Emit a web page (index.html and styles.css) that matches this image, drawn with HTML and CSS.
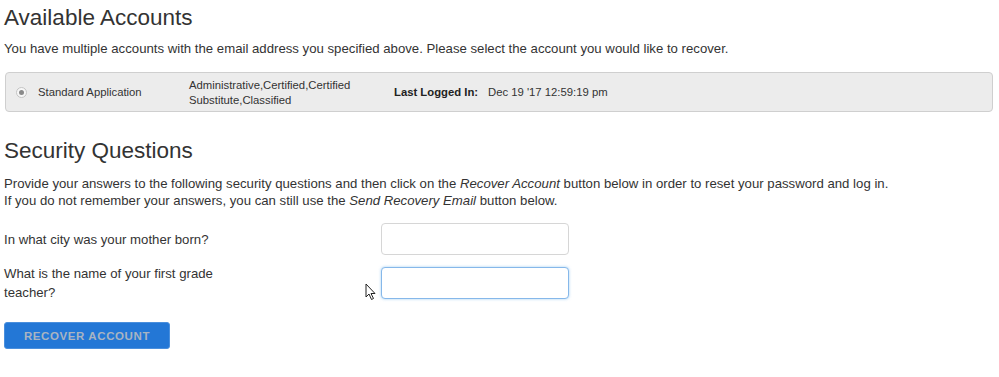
FILE: index.html
```html
<!DOCTYPE html>
<html lang="en">
<head>
    <meta charset="UTF-8">
    <title>Recover Account</title>
    <link rel="stylesheet" href="styles.css">
</head>
<body>
    <h2>Available Accounts</h2>
    <p class="intro">You have multiple accounts with the email address you specified above. Please select the account you would like to recover.</p>

    <div class="account">
        <span class="radio"><span class="dot"></span></span>
        <span class="app-name">Standard Application</span>
        <span class="roles">Administrative,Certified,Certified<br>Substitute,Classified</span>
        <span class="last-label">Last Logged In:</span>
        <span class="last-date">Dec 19 '17 12:59:19 pm</span>
    </div>

    <h2 class="security-title">Security Questions</h2>
    <p class="intro two-line">Provide your answers to the following security questions and then click on the <em>Recover Account</em> button below in order to reset your password and log in.<br>If you do not remember your answers, you can still use the <em>Send Recovery Email</em> button below.</p>

    <form class="questions">
        <div class="question">
            <label for="q1">In what city was your mother born?</label>
            <input type="text" id="q1">
        </div>
        <div class="question">
            <label for="q2">What is the name of your first grade teacher?</label>
            <div class="field">
                <svg class="cursor" width="12" height="18" viewBox="0 0 12 18">
                    <path d="M1 1 L1 14 L4 11 L6.5 16.5 L8.5 15.5 L6 10.5 L10 10.5 Z" fill="#fff" stroke="#222" stroke-width="1"/>
                </svg>
                <input type="text" id="q2" class="focused">
            </div>
        </div>
        <button type="button">Recover Account</button>
    </form>
</body>
</html>
```

FILE: styles.css
```css
body {
    font-family: "Liberation Sans", Arial, sans-serif;
    color: #333;
    margin: 0;
    padding: 0 6px 0 4px;
    font-size: 13.2px;
}

h2 {
    font-size: 22.5px;
    font-weight: normal;
    margin: 5px 0 0;
    line-height: 26px;
}

.intro {
    margin: 9px 0 0;
    line-height: 17px;
    font-size: 13.2px;
}

.account {
    margin: 15px 0 0 1px;
    height: 38px;
    background-color: #ececec;
    border: 1px solid #cfcfcf;
    border-radius: 4px;
    display: flex;
    align-items: center;
    font-size: 11.3px;
}

.radio {
    width: 9px;
    height: 9px;
    border-radius: 50%;
    border: 1px solid #c4c4c4;
    background: #f7f7f7;
    margin-left: 10px;
    display: flex;
    align-items: center;
    justify-content: center;
}

.dot {
    width: 5px;
    height: 5px;
    border-radius: 50%;
    background: #8a8a8a;
}

.app-name {
    margin-left: 11px;
    width: 151px;
}

.roles {
    width: 205px;
    line-height: 15px;
    margin-top: 1px;
}

.last-label {
    font-weight: bold;
    width: 94px;
    color: #222;
}

.security-title {
    margin-top: 26px;
}

.two-line {
    margin-top: 11px;
}

.questions {
    margin-top: 14px;
}

.question {
    display: flex;
    align-items: center;
    margin-bottom: 9px;
}

.question label {
    width: 232px;
    line-height: 19px;
    font-size: 13.2px;
}

.field {
    position: relative;
    margin-left: 145px;
}

.question > input {
    margin-left: 145px;
}

input {
    width: 188px;
    height: 32px;
    box-sizing: border-box;
    border: 1px solid #d6d6d6;
    border-radius: 4px;
    padding: 6px 8px;
    background: #fff;
}

input.focused {
    border-color: #86b8ea;
    box-shadow: 0 0 3px rgba(102, 175, 233, 0.6);
}

.cursor {
    position: absolute;
    left: -16px;
    top: 16px;
}

button {
    margin-top: 11px;
    width: 166px;
    height: 27px;
    background-color: #2377d6;
    border: 1px solid #4a8fdd;
    border-radius: 3px;
    color: #a9b4c2;
    font-family: "Liberation Sans", Arial, sans-serif;
    font-weight: bold;
    font-size: 11.5px;
    letter-spacing: 0.6px;
    text-transform: uppercase;
}
```
